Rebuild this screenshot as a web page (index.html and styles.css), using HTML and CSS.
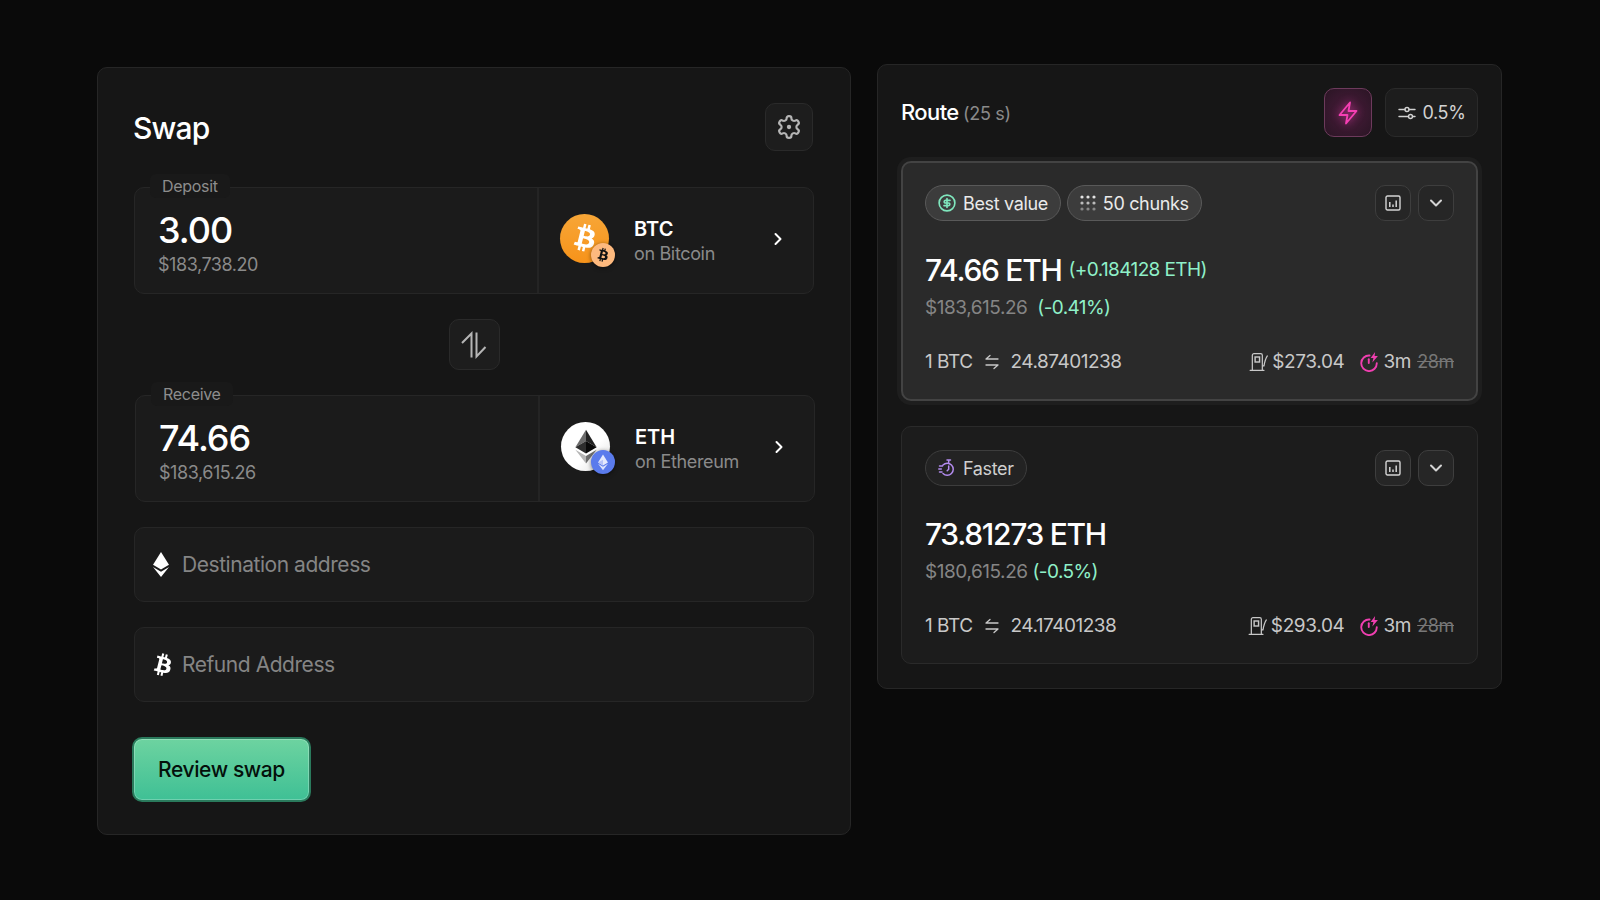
FILE: index.html
```html
<!DOCTYPE html>
<html lang="en">
<head>
    <meta charset="UTF-8">
    <meta name="viewport" content="width=device-width, initial-scale=1.0">
    <title>Swap</title>
    <link rel="stylesheet" href="styles.css">
</head>
<body>
    <svg class="sprites" width="0" height="0">
        <symbol id="btc-mark" viewBox="0 0 24 24">
            <path d="M17.288 10.291c.24-1.59-.974-2.45-2.64-3.03l.54-2.153-1.315-.33-.525 2.107c-.345-.087-.705-.167-1.064-.25l.526-2.127-1.32-.33-.54 2.165c-.285-.067-.565-.132-.84-.2l-1.815-.45-.35 1.407s.975.225.955.236c.535.136.63.486.615.766l-1.477 5.92c-.075.166-.24.406-.614.314.015.02-.96-.24-.96-.24l-.66 1.51 1.71.426.93.242-.54 2.19 1.32.327.54-2.17c.36.1.705.19 1.05.273l-.51 2.154 1.32.33.545-2.19c2.24.427 3.93.257 4.64-1.774.57-1.637-.03-2.58-1.217-3.196.854-.193 1.5-.76 1.68-1.93h.01zm-3.01 4.22c-.404 1.64-3.157.75-4.05.53l.72-2.9c.896.23 3.757.67 3.33 2.37zm.41-4.24c-.37 1.49-2.662.735-3.405.55l.654-2.64c.744.18 3.137.524 2.75 2.084v.006z"/>
        </symbol>
        <symbol id="chart" viewBox="0 0 16 16">
            <rect x="1" y="1" width="14" height="14" rx="1.5" fill="none" stroke="currentColor" stroke-width="1.4"/>
            <path d="M4.8 7v5M8 9.5V12M11.2 5.5V12" fill="none" stroke="currentColor" stroke-width="1.5"/>
        </symbol>
        <symbol id="chevron" viewBox="0 0 16 16">
            <path d="M3 5.5 8 10.5 13 5.5" fill="none" stroke="currentColor" stroke-width="2" stroke-linecap="round" stroke-linejoin="round"/>
        </symbol>
        <symbol id="rate" viewBox="0 0 16 16">
            <path d="M6 1.5 2 5h12M10 14.5 14 11H2" fill="none" stroke="currentColor" stroke-width="1.3" stroke-linecap="round" stroke-linejoin="round"/>
        </symbol>
        <symbol id="fuel" viewBox="0 0 18 18">
            <path d="M3 16V3A1.500 1.500 0 0 1 4.500 1.500h6A1.500 1.500 0 0 1 12 3V16M1 16.500h12.500M12 12.500h1.500c.5-3 1-6 3-9" fill="none" stroke="currentColor" stroke-width="1.1" stroke-linecap="round" stroke-linejoin="round"/>
            <rect x="5.500" y="4.500" width="4" height="4.500" fill="none" stroke="currentColor" stroke-width="1.3"/>
        </symbol>
        <symbol id="quick" viewBox="0 0 18 18">
            <path d="M9.500 3.200A7 7 0 1 0 16 10" fill="none" stroke="currentColor" stroke-width="1.7" stroke-linecap="round"/>
            <path d="M8.800 6.500v3.500" fill="none" stroke="currentColor" stroke-width="1.7" stroke-linecap="round"/>
            <path d="M14.500 0 10.500 5.500h2.500L12 9.500l5-6h-3z" fill="currentColor"/>
        </symbol>
    </svg>

    <main class="page">
        <section class="panel swap">
            <header class="swap-head">
                <h1>Swap</h1>
                <button class="icon-btn gear">
                    <svg width="26" height="26" viewBox="0 0 24 24" fill="none" stroke="currentColor" stroke-width="2" stroke-linejoin="round">
                        <path d="M12.22 2h-.44a2 2 0 0 0-2 2v.18a2 2 0 0 1-1 1.73l-.43.25a2 2 0 0 1-2 0l-.15-.08a2 2 0 0 0-2.73.73l-.22.38a2 2 0 0 0 .73 2.73l.15.1a2 2 0 0 1 1 1.72v.51a2 2 0 0 1-1 1.74l-.15.09a2 2 0 0 0-.73 2.73l.22.38a2 2 0 0 0 2.73.73l.15-.08a2 2 0 0 1 2 0l.43.25a2 2 0 0 1 1 1.73V20a2 2 0 0 0 2 2h.44a2 2 0 0 0 2-2v-.18a2 2 0 0 1 1-1.73l.43-.25a2 2 0 0 1 2 0l.15.08a2 2 0 0 0 2.73-.73l.22-.39a2 2 0 0 0-.73-2.73l-.15-.08a2 2 0 0 1-1-1.74v-.5a2 2 0 0 1 1-1.74l.15-.09a2 2 0 0 0 .73-2.73l-.22-.38a2 2 0 0 0-2.73-.73l-.15.08a2 2 0 0 1-2 0l-.43-.25a2 2 0 0 1-1-1.73V4a2 2 0 0 0-2-2z"/>
                        <circle cx="12" cy="12" r="2" fill="currentColor" stroke="none"/>
                    </svg>
                </button>
            </header>

            <div class="trade">
                <span class="trade-label">Deposit</span>
                <div class="amount">
                    <div class="amount-value">3.00</div>
                    <div class="amount-usd">$183,738.20</div>
                </div>
                <div class="token">
                    <div class="coin coin-btc">
                        <svg width="44" height="44" class="coin-mark"><use href="#btc-mark"/></svg>
                        <span class="chain chain-btc"><svg width="22" height="22"><use href="#btc-mark"/></svg></span>
                    </div>
                    <div class="token-text">
                        <div class="token-name">BTC</div>
                        <div class="token-chain">on Bitcoin</div>
                    </div>
                    <svg class="token-arrow" width="14" height="14" viewBox="0 0 14 14"><path d="M4.500 2 9.500 7l-5 5" fill="none" stroke="currentColor" stroke-width="2" stroke-linecap="round" stroke-linejoin="round"/></svg>
                </div>
            </div>

            <button class="icon-btn flip">
                <svg width="28" height="28" viewBox="0 0 28 28" fill="none" stroke="currentColor" stroke-width="2"><path d="M11.500 26.500V2.500L2 12M16.500 1.500v24l9-9.500"/></svg>
            </button>

            <div class="trade trade-receive">
                <span class="trade-label">Receive</span>
                <div class="amount">
                    <div class="amount-value">74.66</div>
                    <div class="amount-usd">$183,615.26</div>
                </div>
                <div class="token">
                    <div class="coin coin-eth">
                        <svg width="30" height="36" viewBox="0 0 24 28">
                            <path d="M12 1 3.500 15 12 10z" fill="#6b6b6b"/>
                            <path d="M12 1 20.500 15 12 10z" fill="#222"/>
                            <path d="M3.500 15 12 20V10z" fill="#2e2e2e"/>
                            <path d="M20.500 15 12 20V10z" fill="#0a0a0a"/>
                            <path d="M3.500 17 12 28V22z" fill="#b5b5b5"/>
                            <path d="M20.500 17 12 28V22z" fill="#707070"/>
                        </svg>
                        <span class="chain chain-eth">
                            <svg width="14" height="18" viewBox="0 0 24 28">
                                <path d="M12 1 3.500 15 12 20 20.500 15z" fill="#e4e9fd"/>
                                <path d="M12 10 3.500 15 12 20z" fill="#b7c4f8"/>
                                <path d="M3.500 17 12 28 20.500 17 12 22z" fill="#dbe2fc"/>
                            </svg>
                        </span>
                    </div>
                    <div class="token-text">
                        <div class="token-name">ETH</div>
                        <div class="token-chain">on Ethereum</div>
                    </div>
                    <svg class="token-arrow" width="14" height="14" viewBox="0 0 14 14"><path d="M4.500 2 9.500 7l-5 5" fill="none" stroke="currentColor" stroke-width="2" stroke-linecap="round" stroke-linejoin="round"/></svg>
                </div>
            </div>

            <div class="field">
                <svg width="18" height="25" viewBox="0 0 18 25" fill="#fff"><path d="M9 0 1 12.800 9 17.500 17 12.800z"/><path d="M1 15 9 25 17 15 9 19.700z"/></svg>
                <span>Destination address</span>
            </div>
            <div class="field">
                <svg class="field-btc" width="36" height="36"><use href="#btc-mark"/></svg>
                <span>Refund Address</span>
            </div>

            <button class="review">Review swap</button>
        </section>

        <section class="panel route">
            <header class="route-head">
                <h2>Route <span class="route-timer">(25 s)</span></h2>
                <div class="route-tools">
                    <button class="icon-btn bolt">
                        <svg width="24" height="28" viewBox="0 0 24 24" fill="none" stroke="currentColor" stroke-width="1.8" stroke-linejoin="round"><path d="M14 1.500 3.500 14h8l-1.500 8.500L20.500 10h-8z"/></svg>
                    </button>
                    <button class="slippage">
                        <svg width="18" height="16" viewBox="0 0 18 16" fill="none" stroke="currentColor" stroke-width="1.4" stroke-linecap="round"><path d="M1 4.500h6M11 4.500h6M1 11.500h9.500M14.500 11.500H17"/><circle cx="9" cy="4.500" r="2"/><circle cx="12.500" cy="11.500" r="2"/></svg>
                        0.5%
                    </button>
                </div>
            </header>

            <article class="card card-best">
                <div class="card-top">
                    <div class="pills">
                        <span class="pill">
                            <svg class="pill-icon teal" width="18" height="18" viewBox="0 0 24 24" fill="none" stroke="currentColor" stroke-width="2.2" stroke-linecap="round"><circle cx="12" cy="12" r="10.500"/><path d="M16 8.500h-5.500a1.800 1.800 0 1 0 0 3.500h3a1.800 1.800 0 1 1 0 3.500H8M12 6v12"/></svg>
                            Best value
                        </span>
                        <span class="pill">
                            <svg class="pill-icon" width="16" height="16" viewBox="0 0 16 16" fill="#e2e2e2">
                                <circle cx="2" cy="2" r="1.600"/><circle cx="8" cy="2" r="1.600"/><circle cx="14" cy="2" r="1.600"/>
                                <circle cx="2" cy="8" r="1.600" fill="#bbb"/><circle cx="8" cy="8" r="1.600" fill="#bbb"/><circle cx="14" cy="8" r="1.600" fill="#bbb"/>
                                <circle cx="2" cy="14" r="1.600" fill="#888"/><circle cx="8" cy="14" r="1.600" fill="#888"/><circle cx="14" cy="14" r="1.600" fill="#888"/>
                            </svg>
                            50 chunks
                        </span>
                    </div>
                    <div class="card-actions">
                        <button class="mini-btn"><svg width="16" height="16"><use href="#chart"/></svg></button>
                        <button class="mini-btn"><svg width="16" height="16"><use href="#chevron"/></svg></button>
                    </div>
                </div>
                <div class="card-amount">74.66 ETH <span class="gain">(+0.184128 ETH)</span></div>
                <div class="card-usd">$183,615.26 <span class="gain gain-wide">(-0.41%)</span></div>
                <div class="card-foot">
                    <div class="rate">1 BTC <svg width="16" height="16"><use href="#rate"/></svg> 24.87401238</div>
                    <div class="meta">
                        <svg class="fuel" width="20" height="20"><use href="#fuel"/></svg>
                        <span class="fee">$273.04</span>
                        <svg class="pink" width="20" height="20"><use href="#quick"/></svg>
                        <span>3m</span>
                        <s>28m</s>
                    </div>
                </div>
            </article>

            <article class="card">
                <div class="card-top">
                    <div class="pills">
                        <span class="pill pill-plain">
                            <svg class="pill-icon purple" width="18" height="18" viewBox="0 0 18 18" fill="none" stroke="currentColor" stroke-width="1.500" stroke-linecap="round"><path d="M5 6A6 6 0 1 1 5 14.500M9 1h3.500M10.700 1v2.500M10.700 7v3.200l-1.500 1.500M1.500 7h3M.8 10h2.500M1.500 13h2.500"/></svg>
                            Faster
                        </span>
                    </div>
                    <div class="card-actions">
                        <button class="mini-btn"><svg width="16" height="16"><use href="#chart"/></svg></button>
                        <button class="mini-btn"><svg width="16" height="16"><use href="#chevron"/></svg></button>
                    </div>
                </div>
                <div class="card-amount">73.81273 ETH</div>
                <div class="card-usd">$180,615.26 <span class="gain">(-0.5%)</span></div>
                <div class="card-foot">
                    <div class="rate">1 BTC <svg width="16" height="16"><use href="#rate"/></svg> 24.17401238</div>
                    <div class="meta">
                        <svg class="fuel" width="20" height="20"><use href="#fuel"/></svg>
                        <span class="fee">$293.04</span>
                        <svg class="pink" width="20" height="20"><use href="#quick"/></svg>
                        <span>3m</span>
                        <s>28m</s>
                    </div>
                </div>
            </article>
        </section>
    </main>
</body>
</html>
```

FILE: styles.css
```css
* {
    box-sizing: border-box;
}
html, body {
    margin: 0;
    height: 900px;
    overflow: hidden;
}
body {
    font-family: Inter, "Liberation Sans", sans-serif;
    background-color: #0a0a0a;
    color: #fff;
}
button {
    font-family: inherit;
    cursor: pointer;
}
.sprites {
    position: absolute;
}
.page {
    display: flex;
    align-items: flex-start;
    gap: 26px;
    padding-left: 97px;
}
.panel {
    background: #161616;
    border: 1px solid #262626;
    border-radius: 10px;
}

/* left panel */
.swap {
    width: 754px;
    height: 768px;
    margin-top: 67px;
    padding: 35px 36px 0;
    display: flex;
    flex-direction: column;
}
.swap-head {
    display: flex;
    justify-content: space-between;
    align-items: center;
    height: 48px;
    margin-bottom: 36px;
}
h1 {
    margin: 2px 0 0 -1px;
    font-size: 30px;
    font-weight: 500;
    letter-spacing: -0.8px;
}
.icon-btn {
    display: flex;
    align-items: center;
    justify-content: center;
    padding: 0;
    background: #1d1d1d;
    border: 1px solid #2a2a2a;
    border-radius: 10px;
    color: #b5b5b5;
}
.gear {
    width: 48px;
    height: 48px;
    margin-right: 1px;
}
.flip {
    width: 51px;
    height: 51px;
    margin: 25px auto;
}
.trade {
    position: relative;
    display: flex;
    height: 107px;
    background: #1b1b1b;
    border: 1px solid #262626;
    border-radius: 10px;
}
.trade-receive {
    margin-left: 1px;
    margin-right: -1px;
}
.trade-label {
    position: absolute;
    left: 15px;
    top: -14px;
    padding: 2px 12px;
    background: #191919;
    border-radius: 6px;
    font-size: 16px;
    line-height: 20px;
    letter-spacing: -0.3px;
    color: #8d8d8d;
}
.amount {
    width: 404px;
    padding: 22px 0 0 23px;
    border-right: 2px solid #242424;
}
.amount-value {
    font-size: 36px;
    line-height: 40px;
    font-weight: 500;
    letter-spacing: -1px;
}
.amount-usd {
    margin-top: 3px;
    font-size: 18px;
    line-height: 24px;
    letter-spacing: -0.45px;
    color: #8a8a8a;
}
.token {
    flex: 1;
    display: flex;
    align-items: center;
    padding: 0 28px 0 21px;
}
.coin {
    position: relative;
    display: flex;
    align-items: center;
    justify-content: center;
    width: 49px;
    height: 49px;
    margin: -5px 25px 0 0;
    border-radius: 50%;
}
.coin-btc {
    background: linear-gradient(#f7a637, #f7931a);
}
.coin-mark {
    fill: #fff;
}
.coin-eth {
    background: linear-gradient(135deg, #fff 60%, #ddd);
}
.chain {
    position: absolute;
    display: flex;
    align-items: center;
    justify-content: center;
    right: -6px;
    bottom: -4px;
    width: 24px;
    height: 24px;
    border-radius: 50%;
    box-shadow: 0 1px 4px rgba(0, 0, 0, 0.5);
}
.chain-btc {
    background: #fdb97e;
    fill: #111;
}
.chain-eth {
    right: -5px;
    bottom: -3px;
    background: #5a7bec;
}
.token-text {
    flex: 1;
}
.token-name {
    font-size: 20px;
    line-height: 26px;
    font-weight: 600;
}
.token-chain {
    font-size: 18px;
    line-height: 24px;
    letter-spacing: -0.35px;
    color: #8a8a8a;
}
.token-arrow {
    margin-top: -4px;
    color: #fff;
}
.field {
    display: flex;
    align-items: center;
    gap: 12px;
    height: 75px;
    margin-top: 25px;
    padding-left: 17px;
    background: #1b1b1b;
    border: 1px solid #262626;
    border-radius: 10px;
    font-size: 21px;
    letter-spacing: -0.45px;
    color: #858585;
}
.field-btc {
    margin: 0 -11px 0 -7px;
    fill: #fff;
}
.review {
    width: 179px;
    height: 65px;
    margin: 35px 0 0 -2px;
    background: linear-gradient(#6dd3a0, #3fc095);
    border: 2px solid #2a7a5c;
    border-radius: 10px;
    box-shadow: inset 0 0 0 1px rgba(255, 255, 255, 0.25);
    font-size: 21px;
    font-weight: 500;
    letter-spacing: -0.4px;
    color: #04100b;
}

/* right panel */
.route {
    width: 625px;
    height: 625px;
    margin-top: 64px;
    padding: 23px;
    display: flex;
    flex-direction: column;
    gap: 25px;
}
.route-head {
    display: flex;
    justify-content: space-between;
    align-items: center;
    height: 49px;
    margin-bottom: -1px;
}
h2 {
    margin: -2px 0 0;
    font-size: 22px;
    font-weight: 500;
    letter-spacing: -0.6px;
}
.route-timer {
    margin-left: -1px;
    font-size: 18px;
    font-weight: 400;
    letter-spacing: -0.3px;
    color: #8a8a8a;
}
.route-tools {
    display: flex;
    gap: 13px;
}
.bolt {
    width: 48px;
    height: 49px;
    background: radial-gradient(circle, #4a1c3c, #2a1524);
    border-color: #6d3a5c;
    color: #f63fb4;
}
.bolt svg {
    filter: drop-shadow(0 0 4px rgba(246, 63, 180, 0.7));
}
.slippage {
    display: flex;
    align-items: center;
    justify-content: center;
    gap: 7px;
    width: 93px;
    height: 49px;
    padding: 0;
    background: #1d1d1d;
    border: 1px solid #2a2a2a;
    border-radius: 10px;
    font-size: 18px;
    letter-spacing: -0.4px;
    color: #d2d2d2;
}
.card {
    height: 238px;
    padding: 23px;
    background: #1c1c1c;
    border: 1px solid #2a2a2a;
    border-radius: 10px;
}
.card-best {
    height: 240px;
    padding: 22px;
    background: #2a2a2a;
    border: 2px solid #434343;
    box-shadow: 0 0 0 4px #1e1e1e;
}
.card-top {
    display: flex;
    justify-content: space-between;
    align-items: center;
    height: 36px;
}
.pills {
    display: flex;
    gap: 6px;
}
.pill {
    display: flex;
    align-items: center;
    gap: 7px;
    height: 36px;
    padding: 0 12px;
    background: #3c3c3c;
    border: 1px solid #595959;
    border-radius: 18px;
    font-size: 18px;
    letter-spacing: -0.35px;
    color: #eaeaea;
}
.pill-plain {
    background: #232323;
    border-color: #3d3d3d;
    color: #cfcfcf;
}
.teal {
    color: #7fe6bd;
}
.purple {
    color: #b48cf0;
}
.pink {
    margin: 0 -2px 0 2px;
    color: #f03fb0;
}
.fuel {
    margin-right: -3px;
}
.card-actions {
    display: flex;
    gap: 7px;
}
.mini-btn {
    display: flex;
    align-items: center;
    justify-content: center;
    width: 36px;
    height: 36px;
    padding: 0;
    background: #262626;
    border: 1px solid #3e3e3e;
    border-radius: 10px;
    color: #d4d4d4;
}
.card-amount {
    display: flex;
    align-items: center;
    gap: 7px;
    margin-top: 28px;
    font-size: 30px;
    line-height: 40px;
    font-weight: 500;
    letter-spacing: -1.3px;
}
.card-best .card-amount {
    margin-top: 29px;
}
.gain {
    font-size: 19px;
    font-weight: 400;
    letter-spacing: -0.6px;
    color: #8ff0c8;
}
.gain-wide {
    margin-left: 5px;
}
.card-usd {
    margin-top: 5px;
    font-size: 19px;
    line-height: 26px;
    letter-spacing: -0.45px;
    color: #858585;
}
.card-foot {
    display: flex;
    justify-content: space-between;
    align-items: center;
    margin-top: 28px;
    font-size: 19px;
    line-height: 26px;
    letter-spacing: -0.35px;
    color: #c8c8c8;
}
.rate, .meta {
    display: flex;
    align-items: center;
}
.rate {
    gap: 11px;
    letter-spacing: -0.5px;
}
.meta {
    gap: 6px;
}
.fee {
    margin-right: 7px;
}
.meta s {
    font-size: 18px;
    color: #777;
}
```
